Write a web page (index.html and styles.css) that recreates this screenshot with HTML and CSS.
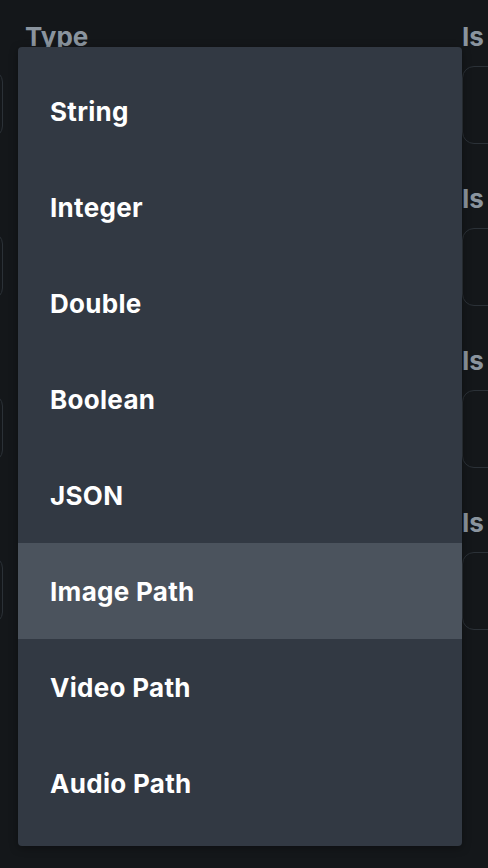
FILE: index.html
```html
<!DOCTYPE html>
<html lang="en">
<head>
<meta charset="utf-8">
<title>Type menu</title>
<link rel="stylesheet" href="styles.css">
</head>
<body>
<div class="form">
  <div class="col col-prev">
    <div class="row"><div class="label"></div><div class="box"></div></div>
    <div class="row"><div class="label"></div><div class="box"></div></div>
    <div class="row"><div class="label"></div><div class="box"></div></div>
    <div class="row"><div class="label"></div><div class="box"></div></div>
  </div>
  <div class="col col-type">
    <div class="row"><div class="label">Type</div><div class="box"></div></div>
    <div class="row"><div class="label"></div><div class="box"></div></div>
    <div class="row"><div class="label"></div><div class="box"></div></div>
    <div class="row"><div class="label"></div><div class="box"></div></div>
  </div>
  <div class="col col-is">
    <div class="row"><div class="label">Is</div><div class="box"></div></div>
    <div class="row"><div class="label">Is</div><div class="box"></div></div>
    <div class="row"><div class="label">Is</div><div class="box"></div></div>
    <div class="row"><div class="label">Is</div><div class="box"></div></div>
  </div>
</div>
<ul class="menu">
  <li class="item">String</li>
  <li class="item">Integer</li>
  <li class="item">Double</li>
  <li class="item">Boolean</li>
  <li class="item">JSON</li>
  <li class="item item-active">Image Path</li>
  <li class="item">Video Path</li>
  <li class="item">Audio Path</li>
</ul>
</body>
</html>
```
FILE: styles.css
```css
html, body {
  margin: 0;
  padding: 0;
}
body {
  width: 488px;
  height: 868px;
  overflow: hidden;
  background: #14171a;
  font-family: Inter, "Noto Sans", sans-serif;
  position: relative;
}
.form {
  display: flex;
  gap: 22px;
  width: 488px;
  overflow: hidden;
}
.col {
  display: flex;
  flex-direction: column;
  flex-shrink: 0;
}
.col-prev {
  width: 200px;
  margin-left: -197px;
}
.col-type {
  width: 415px;
}
.col-is {
  width: 200px;
}
.row {
  height: 162px;
  display: flex;
  flex-direction: column;
}
.label {
  height: 26px;
  padding-top: 24px;
  font-size: 26px;
  line-height: 26px;
  font-weight: 700;
  color: #8a949e;
}
.box {
  margin-top: 16px;
  height: 76px;
  border: 1px solid #2b3137;
  border-radius: 12px;
}
.col-prev .box {
  margin-top: 20px;
  height: 66px;
}
.menu {
  position: absolute;
  left: 18px;
  top: 47px;
  width: 444px;
  margin: 0;
  padding: 16px 0 15px;
  list-style: none;
  background: #323943;
  border-radius: 4px;
  box-shadow: 0 2px 8px rgba(0, 0, 0, 0.35);
}
.item {
  height: 96px;
  display: flex;
  align-items: center;
  padding-left: 32px;
  font-size: 26px;
  font-weight: 700;
  color: #ffffff;
  letter-spacing: 0.3px;
}
.item-active {
  background: #4b535d;
}
```
